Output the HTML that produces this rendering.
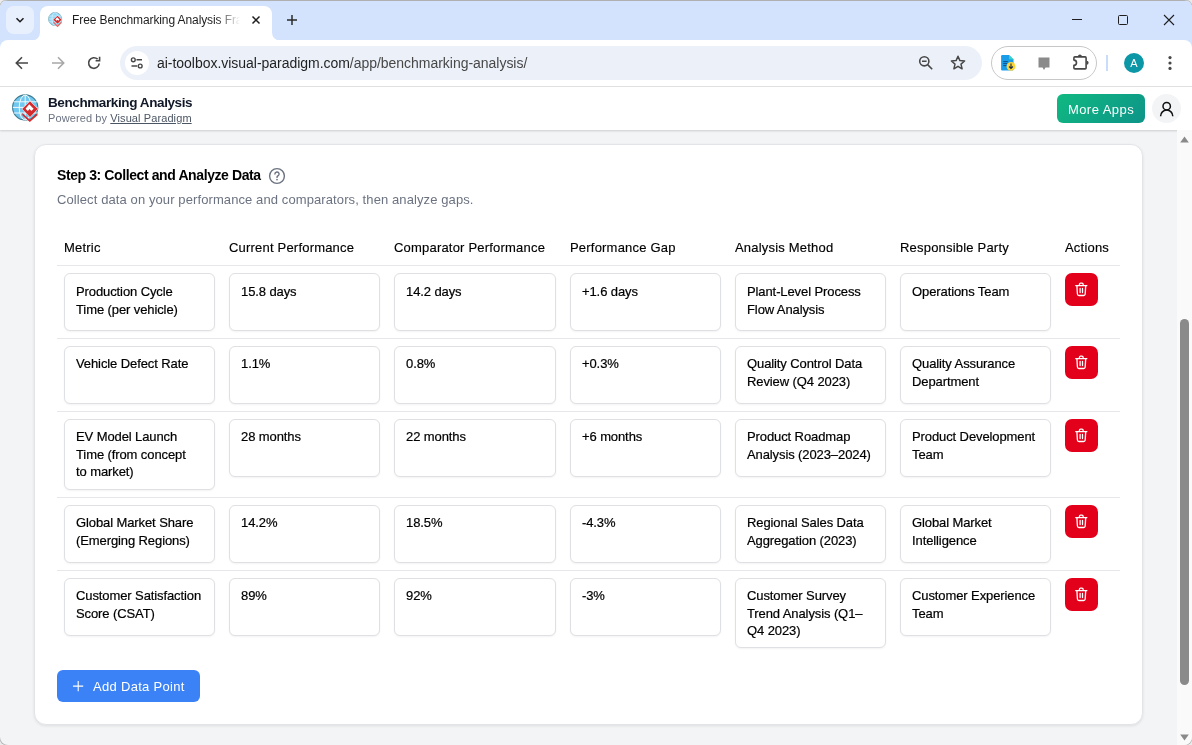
<!DOCTYPE html>
<html><head><meta charset="utf-8">
<style>
*{box-sizing:border-box;margin:0;padding:0}
html,body{width:1192px;height:745px;overflow:hidden;background:#ebebeb}
body{font-family:"Liberation Sans",sans-serif;position:relative;color:#111}
.a{position:absolute}
#win{position:absolute;left:0;top:0;width:1192px;height:745px;border-radius:8px;overflow:hidden;background:#f3f4f6;will-change:transform;box-shadow:0 0 0 1px #b3b3b3}
#strip{position:absolute;left:0;top:0;width:1192px;height:40px;background:#d3e3fd;border-top:1px solid #b0b0b0}
#toolbar{position:absolute;left:0;top:40px;width:1192px;height:47px;background:#fff;border-bottom:1px solid #e3e3e3}
#apphdr{position:absolute;left:0;top:87px;width:1192px;height:43px;background:#fff;box-shadow:0 1px 2px rgba(0,0,0,.16)}
#scroll{position:absolute;left:1177px;top:130px;width:15px;height:615px;background:#fafafa}
.card{position:absolute;left:34px;top:144px;width:1109px;height:581px;background:#fff;border:1px solid #e3e4e7;border-radius:12px;box-shadow:0 1px 3px rgba(0,0,0,.09)}
.th{position:absolute;top:240px;font-size:13px;line-height:16px;letter-spacing:.2px;color:#000;white-space:nowrap;-webkit-text-stroke:.15px #000}
.ta{position:absolute;border:1px solid #dfe0e3;border-radius:6px;background:#fff;padding:8px 0 0 11px;font-size:13px;line-height:17.6px;letter-spacing:-.1px;color:#000;white-space:pre;-webkit-text-stroke:.2px #000;width:151px;height:58px;box-shadow:0 1px 2px rgba(0,0,0,.05)}
.del{position:absolute;left:1065px;width:33px;height:33px;border-radius:7px;background:#e3001b}
.del svg{position:absolute;left:10px;top:9px}
.rl{position:absolute;left:57px;width:1063px;height:1px;background:#e5e7eb}
</style></head>
<body>
<div id="win">
  <div id="strip"></div>
  <!-- dropdown -->
  <div class="a" style="left:6px;top:6px;width:28px;height:28px;border-radius:8px;background:#e9f0fd"></div>
  <svg class="a" style="left:14px;top:14px" width="12" height="12" viewBox="0 0 12 12"><path d="M2.5 4.2 L6 7.7 L9.5 4.2" fill="none" stroke="#1f1f1f" stroke-width="1.6"/></svg>
  <!-- tab -->
  <div class="a" style="left:40px;top:6px;width:232px;height:40px;background:#fff;border-radius:8px 8px 0 0"></div>
  <svg class="a" style="left:30px;top:30px" width="252" height="12" viewBox="30 30 252 12"><path d="M32 40.5A8 8 0 0 0 40 32.5L40 42L32 42Z" fill="#fff"/><path d="M272 32.5A8 8 0 0 0 280 40.5L280 42L272 42Z" fill="#fff"/></svg>
  <svg class="a" style="left:46.3px;top:10.3px" width="18" height="18" viewBox="8 90 34 35">
    <circle cx="25.2" cy="107.5" r="12.8" fill="#8fd8f6" stroke="#7aa9b8" stroke-width="1.5"/>
    <path d="M13.5 101.8H37M12.8 107.4H37.6M13.5 113H37" stroke="#e6f6fd" stroke-width="1.2" fill="none"/>
    <ellipse cx="25.2" cy="107.5" rx="6" ry="12.5" fill="none" stroke="#e6f6fd" stroke-width="1.2"/>
    <path d="M30 100.8 L38.3 109.1 L30 117.4 L21.7 109.1Z" fill="#fff"/>
    <path d="M30 101.3 L37.8 109.1 L30 116.9 L21.7 109.1Z" fill="#d42a2e"/>
    <path d="M21.8 112 L30 120 L38 112 L38 115.5 L30 123.3 L21.8 115.5Z" fill="#e4696b"/>
    <path d="M29.2 104.3 L33.6 108.7 L31.4 110.9 L29.6 109.1 L27.8 110.9 L25.6 108.7Z" fill="#fff"/>
  </svg>
  <div class="a" style="left:72px;top:13px;font-size:12px;line-height:14px;color:#1f1f1f;white-space:nowrap;width:168px;overflow:hidden;letter-spacing:-.1px;-webkit-mask-image:linear-gradient(90deg,#000 86%,transparent)">Free Benchmarking Analysis Framework</div>
  <svg class="a" style="left:251px;top:15px" width="10" height="10" viewBox="0 0 10 10"><path d="M1.5 1.5L8.5 8.5M8.5 1.5L1.5 8.5" stroke="#1f1f1f" stroke-width="1.5"/></svg>
  <svg class="a" style="left:286px;top:14px" width="12" height="12" viewBox="0 0 12 12"><path d="M6 1V11M1 6H11" stroke="#2a2a2a" stroke-width="1.5"/></svg>
  <!-- window controls -->
  <div class="a" style="left:1072px;top:19px;width:10px;height:1px;background:#1f1f1f"></div>
  <div class="a" style="left:1118px;top:15px;width:10px;height:10px;border:1px solid #1f1f1f;border-radius:1.5px"></div>
  <svg class="a" style="left:1163px;top:14px" width="12" height="12" viewBox="0 0 12 12"><path d="M1 1L11 11M11 1L1 11" stroke="#1f1f1f" stroke-width="1.1"/></svg>

  <div id="toolbar"></div>
  <div class="a" style="left:0;top:40px;width:8px;height:8px;background:#d3e3fd"></div>
  <div class="a" style="left:0;top:40px;width:16px;height:16px;background:#fff;border-radius:8px 0 0 0"></div>
  <div class="a" style="left:1184px;top:40px;width:8px;height:8px;background:#d3e3fd"></div>
  <div class="a" style="left:1176px;top:40px;width:16px;height:16px;background:#fff;border-radius:0 8px 0 0"></div>
  <!-- nav icons -->
  <svg class="a" style="left:14px;top:55px" width="16" height="16" viewBox="0 0 16 16"><path d="M14 8H2.5M8 2.3L2.3 8L8 13.7" fill="none" stroke="#474747" stroke-width="1.6"/></svg>
  <svg class="a" style="left:50px;top:55px" width="16" height="16" viewBox="0 0 16 16"><path d="M2 8H13.5M8 2.3L13.7 8L8 13.7" fill="none" stroke="#a8a8a8" stroke-width="1.6"/></svg>
  <svg class="a" style="left:86px;top:55px" width="16" height="16" viewBox="0 0 16 16"><path d="M13.2 8.5A5.3 5.3 0 1 1 11.6 4.2" fill="none" stroke="#474747" stroke-width="1.6"/><path d="M13.6 1.8V5.8H9.6" fill="none" stroke="#474747" stroke-width="1.6"/></svg>
  <!-- omnibox -->
  <div class="a" style="left:120px;top:46px;width:862px;height:34px;border-radius:17px;background:#ecf1f9"></div>
  <div class="a" style="left:125px;top:51px;width:24px;height:24px;border-radius:12px;background:#fff"></div>
  <svg class="a" style="left:129px;top:55px" width="16" height="16" viewBox="0 0 16 16"><circle cx="4.3" cy="4.8" r="1.9" fill="none" stroke="#474747" stroke-width="1.4"/><path d="M7.5 4.8H13" stroke="#474747" stroke-width="1.4"/><circle cx="11.2" cy="11" r="1.9" fill="none" stroke="#474747" stroke-width="1.4"/><path d="M2.5 11H8.2" stroke="#474747" stroke-width="1.4"/></svg>
  <div class="a" style="left:157px;top:55px;font-size:14px;line-height:16px;color:#1f1f1f;white-space:nowrap;letter-spacing:-.03px">ai-toolbox.visual-paradigm.com<span style="color:#474747">/app/benchmarking-analysis/</span></div>
  <svg class="a" style="left:918px;top:55px" width="16" height="16" viewBox="0 0 16 16"><circle cx="6.3" cy="6.3" r="4.6" fill="none" stroke="#474747" stroke-width="1.6"/><path d="M4 6.3H8.6M9.6 9.6L14.2 14.2" stroke="#474747" stroke-width="1.6"/></svg>
  <svg class="a" style="left:949px;top:54px" width="18" height="18" viewBox="0 0 18 18"><path d="M9 2.2L10.9 6.6L15.6 7L12 10.1L13.1 14.8L9 12.3L4.9 14.8L6 10.1L2.4 7L7.1 6.6Z" fill="none" stroke="#474747" stroke-width="1.5" stroke-linejoin="round"/></svg>
  <!-- extensions pill -->
  <div class="a" style="left:991px;top:46px;width:106px;height:34px;border-radius:17px;border:1px solid #c7c7c7;background:#fff"></div>
  <svg class="a" style="left:1000px;top:54px" width="17" height="18" viewBox="1000 54 17 18"><path d="M1002.3 55H1009L1013.5 59.5V69.3A1.2 1.2 0 0 1 1012.3 70.5H1002.3A1.2 1.2 0 0 1 1001.1 69.3V56.2A1.2 1.2 0 0 1 1002.3 55Z" fill="#1a9de8"/><path d="M1009 55L1013.5 59.5H1010.2A1.2 1.2 0 0 1 1009 58.3Z" fill="#2fd6c4"/><path d="M1003.2 61.6H1007.8M1003.2 63.6H1007.8M1003.2 65.6H1006.6" stroke="#0b4f8a" stroke-width="1"/><circle cx="1011" cy="66.4" r="4.4" fill="#fbd53a"/><path d="M1011 63.6V68.2M1009.1 66.5L1011 68.4L1012.9 66.5" fill="none" stroke="#1b2a4a" stroke-width="1.1"/></svg>
  <svg class="a" style="left:1038px;top:57px" width="12" height="14" viewBox="0 0 12 14"><path d="M0.5 0.5H11.5V10.5H7.5L6 13L4.5 10.5H0.5Z" fill="#8a8a8a"/></svg>
  <svg class="a" style="left:1070px;top:52px" width="22" height="20" viewBox="1070 52 22 20"><path d="M1074.9 56.9H1085.1A1 1 0 0 1 1086.1 57.9V67.9A1 1 0 0 1 1085.1 68.9H1074.9A1 1 0 0 1 1073.9 67.9V65.3A2.6 2.6 0 0 0 1073.9 60.1V57.9A1 1 0 0 1 1074.9 56.9Z" fill="none" stroke="#474747" stroke-width="1.6" stroke-linejoin="round"/><path d="M1077.9 56.4A2 2 0 0 1 1081.9 56.4Z" fill="#474747"/><path d="M1086.6 60.7A2 2 0 0 1 1086.6 64.7Z" fill="#474747"/></svg>
  <div class="a" style="left:1106px;top:55px;width:2px;height:16px;background:#c9dcfb"></div>
  <div class="a" style="left:1124px;top:53px;width:20px;height:20px;border-radius:50%;background:#0c97a7;color:#fff;font-size:11px;line-height:21px;text-align:center">A</div>
  <svg class="a" style="left:1166px;top:55px" width="8" height="16" viewBox="0 0 8 16"><circle cx="4" cy="2.6" r="1.6" fill="#474747"/><circle cx="4" cy="8" r="1.6" fill="#474747"/><circle cx="4" cy="13.4" r="1.6" fill="#474747"/></svg>

  <!-- app header -->
  <div id="apphdr"></div>
  <svg class="a" style="left:8px;top:90px" width="34" height="35" viewBox="8 90 34 35">
    <circle cx="25.2" cy="107.5" r="12.6" fill="#70c8f0" stroke="#3d7b8f" stroke-width="1.1"/>
    <path d="M13.5 101.8H37M12.8 107.4H37.6M13.5 113H37" stroke="#f2fafe" stroke-width="1" fill="none"/>
    <ellipse cx="25.2" cy="107.5" rx="6" ry="12.5" fill="none" stroke="#f2fafe" stroke-width="1"/>
    <path d="M25.2 95V120" stroke="#f2fafe" stroke-width="1"/>
    <path d="M30 100.8 L38.3 109.1 L30 117.4 L21.7 109.1Z" fill="#fff"/>
    <path d="M30 101.3 L37.8 109.1 L30 116.9 L22.2 109.1Z" fill="#d42a2e"/>
    <path d="M22.3 113 L29.8 119.8 L37.5 113 L37.5 115.2 L29.8 122 L22.3 115.2Z" fill="#d42a2e"/>
    <path d="M29.2 104.3 L33.6 108.7 L31.4 110.9 L29.6 109.1 L27.8 110.9 L25.6 108.7Z" fill="#fff"/>
  </svg>
  <div class="a" style="left:48px;top:95px;font-size:13.5px;line-height:16px;font-weight:bold;color:#111827;white-space:nowrap;letter-spacing:-.4px">Benchmarking Analysis</div>
  <div class="a" style="left:48px;top:112px;font-size:11px;line-height:13px;color:#6b7280;white-space:nowrap;letter-spacing:.1px">Powered by <span style="text-decoration:underline;color:#4b5563">Visual Paradigm</span></div>
  <div class="a" style="left:1057px;top:94px;width:88px;height:29px;border-radius:6px;background:linear-gradient(135deg,#10b981,#0d9488);color:#fff;font-size:13px;line-height:30px;text-align:center;letter-spacing:.45px;padding-top:1px">More Apps</div>
  <div class="a" style="left:1152px;top:94px;width:29px;height:29px;border-radius:50%;background:#f3f4f6"></div>
  <svg class="a" style="left:1157px;top:100px" width="18" height="18" viewBox="0 0 18 18"><circle cx="9.7" cy="6.2" r="3.7" fill="none" stroke="#111" stroke-width="1.5"/><path d="M3.6 16.2A6.1 6.1 0 0 1 15.8 16.2" fill="none" stroke="#111" stroke-width="1.5"/></svg>

  <!-- scrollbar -->
  <div id="scroll"></div>
  <svg class="a" style="left:1180px;top:136px" width="9" height="7" viewBox="0 0 9 7"><path d="M4.5 0.5L8.8 6.5H0.2Z" fill="#8a8a8a"/></svg>
  <div class="a" style="left:1180px;top:319px;width:9px;height:366px;border-radius:4.5px;background:#8a8a8a"></div>
  <svg class="a" style="left:1180px;top:734px" width="9" height="7" viewBox="0 0 9 7"><path d="M4.5 6.5L8.8 0.5H0.2Z" fill="#8a8a8a"/></svg>

  <!-- card -->
  <div class="card"></div>
  <div class="a" style="left:57px;top:167px;font-size:14px;line-height:16px;font-weight:bold;color:#000;white-space:nowrap;letter-spacing:-.4px">Step 3: Collect and Analyze Data</div>
  <svg class="a" style="left:268px;top:167px" width="18" height="18" viewBox="0 0 18 18"><circle cx="9" cy="9" r="7.4" fill="none" stroke="#6b7280" stroke-width="1.4"/><path d="M6.9 7.1A2.1 2.1 0 1 1 9.8 9C9.2 9.3 9 9.7 9 10.4" fill="none" stroke="#6b7280" stroke-width="1.4" stroke-linecap="round"/><circle cx="9" cy="12.6" r=".85" fill="#6b7280"/></svg>
  <div class="a" style="left:57px;top:192px;font-size:13px;line-height:16px;color:#6b7280;white-space:nowrap;letter-spacing:.1px">Collect data on your performance and comparators, then analyze gaps.</div>

  <div class="th" style="left:64px">Metric</div>
  <div class="th" style="left:229px">Current Performance</div>
  <div class="th" style="left:394px">Comparator Performance</div>
  <div class="th" style="left:570px">Performance Gap</div>
  <div class="th" style="left:735px">Analysis Method</div>
  <div class="th" style="left:900px">Responsible Party</div>
  <div class="th" style="left:1065px">Actions</div>
  <div class="rl" style="top:265px"></div>

  <!-- row1 -->
  <div class="ta" style="left:64px;top:273px;padding-top:9px">Production Cycle
Time (per vehicle)</div>
  <div class="ta" style="left:229px;top:273px;padding-top:9px">15.8 days</div>
  <div class="ta" style="left:394px;top:273px;width:162px;padding-top:9px">14.2 days</div>
  <div class="ta" style="left:570px;top:273px;padding-top:9px">+1.6 days</div>
  <div class="ta" style="left:735px;top:273px;padding-top:9px">Plant-Level Process
Flow Analysis</div>
  <div class="ta" style="left:900px;top:273px;padding-top:9px">Operations Team</div>
  <div class="del" style="top:273px"><svg width="13" height="15" viewBox="0 0 13 15"><path d="M0.7 3.6H11.9M4.4 3.6V2.4A1.3 1.3 0 0 1 5.7 1.1H6.9A1.3 1.3 0 0 1 8.2 2.4V3.6M1.9 3.6L2.4 12A1.6 1.6 0 0 0 4 13.5H8.6A1.6 1.6 0 0 0 10.2 12L10.7 3.6M5.1 6.3V10.5M7.5 6.3V10.5" fill="none" stroke="#fff" stroke-width="1.3" stroke-linecap="round"/></svg></div>
  <div class="rl" style="top:338px"></div>

  <!-- row2 -->
  <div class="ta" style="left:64px;top:346px">Vehicle Defect Rate</div>
  <div class="ta" style="left:229px;top:346px">1.1%</div>
  <div class="ta" style="left:394px;top:346px;width:162px">0.8%</div>
  <div class="ta" style="left:570px;top:346px">+0.3%</div>
  <div class="ta" style="left:735px;top:346px">Quality Control Data
Review (Q4 2023)</div>
  <div class="ta" style="left:900px;top:346px">Quality Assurance
Department</div>
  <div class="del" style="top:346px"><svg width="13" height="15" viewBox="0 0 13 15"><path d="M0.7 3.6H11.9M4.4 3.6V2.4A1.3 1.3 0 0 1 5.7 1.1H6.9A1.3 1.3 0 0 1 8.2 2.4V3.6M1.9 3.6L2.4 12A1.6 1.6 0 0 0 4 13.5H8.6A1.6 1.6 0 0 0 10.2 12L10.7 3.6M5.1 6.3V10.5M7.5 6.3V10.5" fill="none" stroke="#fff" stroke-width="1.3" stroke-linecap="round"/></svg></div>
  <div class="rl" style="top:411px"></div>

  <!-- row3 -->
  <div class="ta" style="left:64px;top:419px;height:71px">EV Model Launch
Time (from concept
to market)</div>
  <div class="ta" style="left:229px;top:419px">28 months</div>
  <div class="ta" style="left:394px;top:419px;width:162px">22 months</div>
  <div class="ta" style="left:570px;top:419px">+6 months</div>
  <div class="ta" style="left:735px;top:419px">Product Roadmap
Analysis (2023–2024)</div>
  <div class="ta" style="left:900px;top:419px">Product Development
Team</div>
  <div class="del" style="top:419px"><svg width="13" height="15" viewBox="0 0 13 15"><path d="M0.7 3.6H11.9M4.4 3.6V2.4A1.3 1.3 0 0 1 5.7 1.1H6.9A1.3 1.3 0 0 1 8.2 2.4V3.6M1.9 3.6L2.4 12A1.6 1.6 0 0 0 4 13.5H8.6A1.6 1.6 0 0 0 10.2 12L10.7 3.6M5.1 6.3V10.5M7.5 6.3V10.5" fill="none" stroke="#fff" stroke-width="1.3" stroke-linecap="round"/></svg></div>
  <div class="rl" style="top:497px"></div>

  <!-- row4 -->
  <div class="ta" style="left:64px;top:505px">Global Market Share
(Emerging Regions)</div>
  <div class="ta" style="left:229px;top:505px">14.2%</div>
  <div class="ta" style="left:394px;top:505px;width:162px">18.5%</div>
  <div class="ta" style="left:570px;top:505px">-4.3%</div>
  <div class="ta" style="left:735px;top:505px">Regional Sales Data
Aggregation (2023)</div>
  <div class="ta" style="left:900px;top:505px">Global Market
Intelligence</div>
  <div class="del" style="top:505px"><svg width="13" height="15" viewBox="0 0 13 15"><path d="M0.7 3.6H11.9M4.4 3.6V2.4A1.3 1.3 0 0 1 5.7 1.1H6.9A1.3 1.3 0 0 1 8.2 2.4V3.6M1.9 3.6L2.4 12A1.6 1.6 0 0 0 4 13.5H8.6A1.6 1.6 0 0 0 10.2 12L10.7 3.6M5.1 6.3V10.5M7.5 6.3V10.5" fill="none" stroke="#fff" stroke-width="1.3" stroke-linecap="round"/></svg></div>
  <div class="rl" style="top:570px"></div>

  <!-- row5 -->
  <div class="ta" style="left:64px;top:578px">Customer Satisfaction
Score (CSAT)</div>
  <div class="ta" style="left:229px;top:578px">89%</div>
  <div class="ta" style="left:394px;top:578px;width:162px">92%</div>
  <div class="ta" style="left:570px;top:578px">-3%</div>
  <div class="ta" style="left:735px;top:578px;height:70px">Customer Survey
Trend Analysis (Q1–
Q4 2023)</div>
  <div class="ta" style="left:900px;top:578px">Customer Experience
Team</div>
  <div class="del" style="top:578px"><svg width="13" height="15" viewBox="0 0 13 15"><path d="M0.7 3.6H11.9M4.4 3.6V2.4A1.3 1.3 0 0 1 5.7 1.1H6.9A1.3 1.3 0 0 1 8.2 2.4V3.6M1.9 3.6L2.4 12A1.6 1.6 0 0 0 4 13.5H8.6A1.6 1.6 0 0 0 10.2 12L10.7 3.6M5.1 6.3V10.5M7.5 6.3V10.5" fill="none" stroke="#fff" stroke-width="1.3" stroke-linecap="round"/></svg></div>

  <!-- add button -->
  <div class="a" style="left:57px;top:670px;width:143px;height:32px;border-radius:6px;background:#3b82f6"></div>
  <svg class="a" style="left:72px;top:680px" width="12" height="12" viewBox="0 0 12 12"><path d="M6.2 1V11.2M1 6.1H11.2" stroke="#fff" stroke-width="1.1"/></svg>
  <div class="a" style="left:93px;top:679px;font-size:13px;line-height:16px;color:#fff;white-space:nowrap;letter-spacing:.3px">Add Data Point</div>
</div>
</body></html>
